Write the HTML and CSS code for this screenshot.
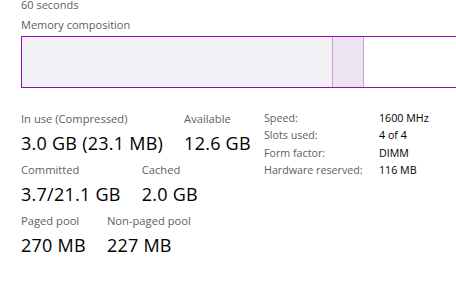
FILE: index.html
```html
<!DOCTYPE html>
<html>
<head>
<meta charset="utf-8">
<link rel="stylesheet" href="styles.css">
</head>
<body>
<div class="panel">
  <div class="caption">60 seconds</div>
  <div class="title">Memory composition</div>
  <div class="bar">
    <div class="seg inuse" style="width:310px"></div>
    <div class="seg modified" style="width:30px"></div>
    <div class="seg standby"></div>
  </div>
  <div class="details">
    <div class="stats">
      <div class="row">
        <div class="stat"><div class="label">In use (Compressed)</div><div class="value">3.0 GB (23.1 MB)</div></div>
        <div class="stat"><div class="label">Available</div><div class="value">12.6 GB</div></div>
      </div>
      <div class="row">
        <div class="stat"><div class="label">Committed</div><div class="value">3.7/21.1 GB</div></div>
        <div class="stat"><div class="label">Cached</div><div class="value">2.0 GB</div></div>
      </div>
      <div class="row">
        <div class="stat"><div class="label">Paged pool</div><div class="value">270 MB</div></div>
        <div class="stat"><div class="label">Non-paged pool</div><div class="value">227 MB</div></div>
      </div>
    </div>
    <div class="specs">
      <div class="spec-label">Speed:</div><div class="spec-value">1600 MHz</div>
      <div class="spec-label">Slots used:</div><div class="spec-value">4 of 4</div>
      <div class="spec-label">Form factor:</div><div class="spec-value">DIMM</div>
      <div class="spec-label">Hardware reserved:</div><div class="spec-value">116 MB</div>
    </div>
  </div>
</div>
</body>
</html>
```

FILE: styles.css
```css
html, body {
  margin: 0;
  padding: 0;
  background: #ffffff;
  overflow: hidden;
}
body {
  width: 456px;
  height: 287px;
  font-family: "Open Sans", "Noto Sans", sans-serif;
}
.panel {
  padding-left: 21px;
}
.caption {
  font-size: 11px;
  line-height: 10px;
  color: #606060;
}
.title {
  font-size: 11px;
  line-height: 14px;
  color: #606060;
  margin-top: 8px;
}
.bar {
  margin-top: 4px;
  width: 460px;
  height: 50px;
  border: 1px solid #8b12ae;
  display: flex;
}
.seg {
  height: 100%;
}
.inuse {
  background: #f3f1f5;
  border-right: 1px solid #c9a0da;
}
.modified {
  background: #ede4f2;
  border-right: 1px solid #c9a0da;
}
.standby {
  flex: 1;
  background: #ffffff;
}
.details {
  display: flex;
  align-items: flex-start;
  margin-top: 24px;
}
.stats {
  width: 243px;
  flex: none;
  display: flex;
  flex-direction: column;
  gap: 8px;
}
.row {
  display: flex;
  gap: 21px;
}
.label {
  font-size: 11.2px;
  line-height: 14px;
  color: #606060;
}
.value {
  font-size: 18px;
  letter-spacing: 0.25px;
  line-height: 24px;
  color: #000000;
  margin-top: 5px;
}
.specs {
  display: grid;
  grid-template-columns: 115px auto;
  grid-auto-rows: 17.3px;
  align-content: start;
  margin-top: -2px;
}
.spec-label {
  font-size: 10.7px;
  line-height: 17.3px;
  color: #606060;
}
.spec-value {
  font-size: 10.7px;
  line-height: 17.3px;
  color: #000000;
}
```
